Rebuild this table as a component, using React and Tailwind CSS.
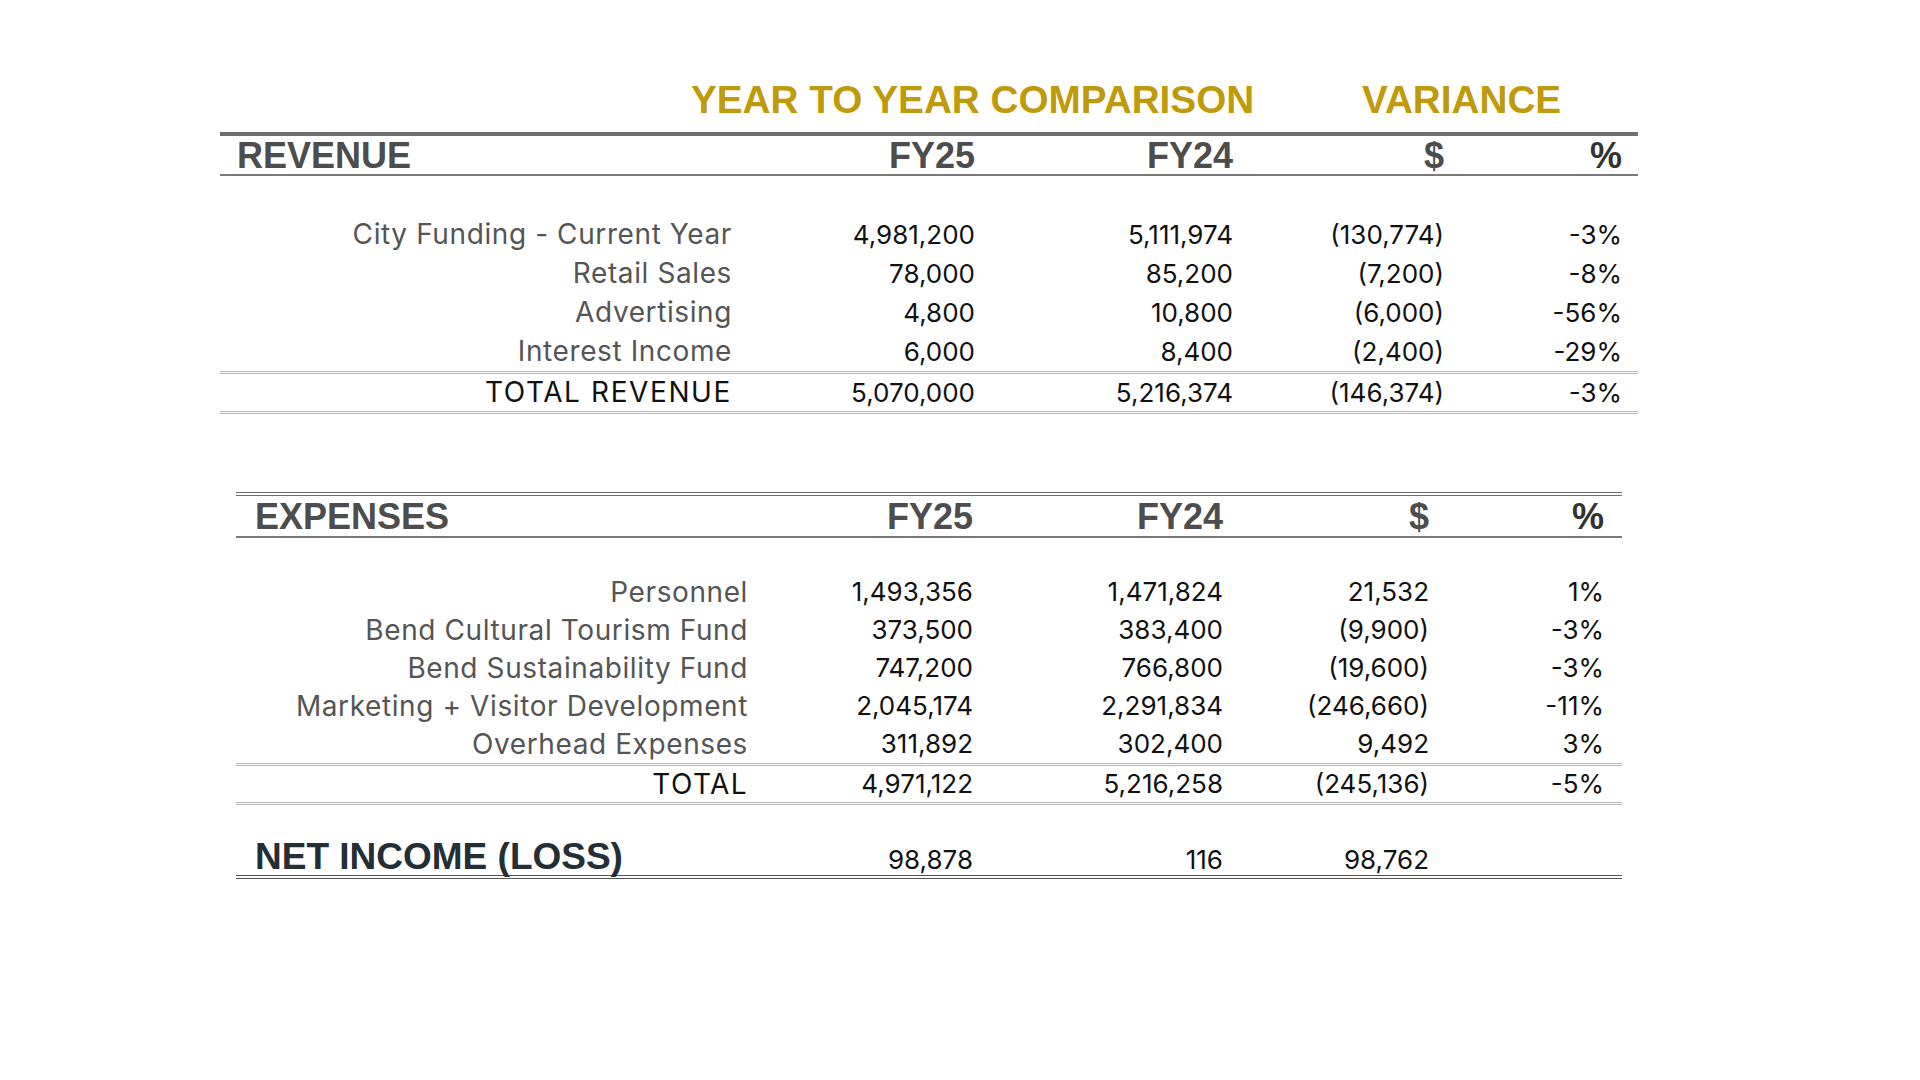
import React from 'react';

const revenueRows = [
    ['City Funding - Current Year', '4,981,200', '5,111,974', '(130,774)', '-3%'],
    ['Retail Sales', '78,000', '85,200', '(7,200)', '-8%'],
    ['Advertising', '4,800', '10,800', '(6,000)', '-56%'],
    ['Interest Income', '6,000', '8,400', '(2,400)', '-29%'],
];

const expenseRows = [
    ['Personnel', '1,493,356', '1,471,824', '21,532', '1%'],
    ['Bend Cultural Tourism Fund', '373,500', '383,400', '(9,900)', '-3%'],
    ['Bend Sustainability Fund', '747,200', '766,800', '(19,600)', '-3%'],
    ['Marketing + Visitor Development', '2,045,174', '2,291,834', '(246,660)', '-11%'],
    ['Overhead Expenses', '311,892', '302,400', '9,492', '3%'],
];

const head = "font-['Liberation_Sans',Arial,sans-serif] font-bold text-[36px] text-[#4d4d4d]";
const body = "font-['Inter',sans-serif] text-[26px]";

// revenue and expenses tables don't line up exactly, so each has its own columns
const revCols = 'grid grid-cols-[512px_243px_258px_211px_178px] pr-[16px] text-right';
const expCols = 'grid grid-cols-[512px_225px_250px_206px_175px] pr-[18px] text-right';

function Row({ cols, cells, className = '', labelClass = 'text-[#555] tracking-[0.6px]' }) {
    return (
        <div className={`${cols} ${body} ${className}`}>
            <span className={`text-[28px] ${labelClass}`}>{cells[0]}</span>
            {cells.slice(1).map((c, i) => (
                <span key={i} className="text-[#111]">{c}</span>
            ))}
        </div>
    );
}

export default function App() {
    return (
        <div className="w-[1920px] h-[1080px] bg-white pt-[77px]">
            {/* Title */}
            <div className="ml-[691px] grid grid-cols-[671px_auto] font-['Liberation_Sans',Arial,sans-serif] font-bold text-[38.7px] leading-[45px] text-[#bf9a0b] mb-[10px]">
                <span>YEAR TO YEAR COMPARISON</span>
                <span>VARIANCE</span>
            </div>

            {/* Revenue */}
            <div className="ml-[220px] w-[1418px]">
                <div className={`${revCols} ${head} h-[44px] leading-[40px] border-t-4 border-b-2 border-t-[#6e6e6e] border-b-[#7a7a7a]`}>
                    <span className="text-left pl-[17px]">REVENUE</span>
                    <span>FY25</span>
                    <span>FY24</span>
                    <span>$</span>
                    <span className="text-[#333]">%</span>
                </div>
                <div className="mt-[39px]">
                    {revenueRows.map(r => (
                        <Row key={r[0]} cols={revCols} cells={r} className="leading-[39px]" />
                    ))}
                </div>
                <Row
                    cols={revCols}
                    cells={['TOTAL REVENUE', '5,070,000', '5,216,374', '(146,374)', '-3%']}
                    labelClass="text-[#111] tracking-[1.6px]"
                    className="leading-[37px] border-y-[3px] border-double border-[#b8b8b8]"
                />
            </div>

            {/* Expenses */}
            <div className="ml-[236px] w-[1386px] mt-[78px]">
                <div className={`${expCols} ${head} h-[46px] leading-[41px] border-t-4 border-t-[#6e6e6e] border-double border-b-2 border-b-[#7a7a7a]`}>
                    <span className="text-left pl-[19px]">EXPENSES</span>
                    <span>FY25</span>
                    <span>FY24</span>
                    <span>$</span>
                    <span className="text-[#333]">%</span>
                </div>
                <div className="mt-[35px]">
                    {expenseRows.map(r => (
                        <Row key={r[0]} cols={expCols} cells={r} className="leading-[38px]" />
                    ))}
                </div>
                <Row
                    cols={expCols}
                    cells={['TOTAL', '4,971,122', '5,216,258', '(245,136)', '-5%']}
                    labelClass="text-[#111] tracking-[1.4px]"
                    className="leading-[36px] border-y-[3px] border-double border-[#b8b8b8]"
                />

                {/* Net income */}
                <div className={`${expCols} items-baseline mt-[33px] border-b-4 border-double border-[#555]`}>
                    <span className="text-left pl-[19px] font-['Liberation_Sans',Arial,sans-serif] font-bold text-[37px] leading-[37px] text-[#232e35]">
                        NET INCOME (LOSS)
                    </span>
                    <span className={`${body} leading-[30px] text-[#111]`}>98,878</span>
                    <span className={`${body} leading-[30px] text-[#111]`}>116</span>
                    <span className={`${body} leading-[30px] text-[#111]`}>98,762</span>
                    <span />
                </div>
            </div>
        </div>
    );
}
